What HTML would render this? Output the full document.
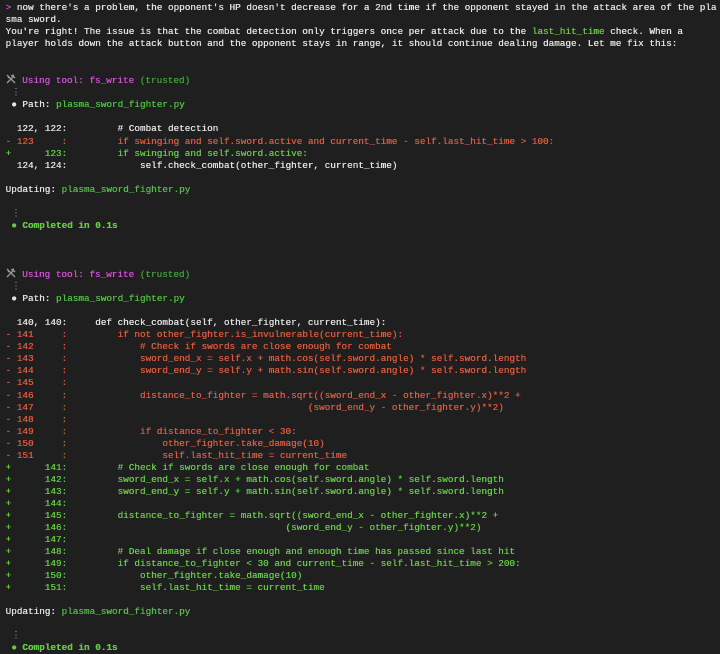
<!DOCTYPE html>
<html><head><meta charset="utf-8"><style>
html,body{margin:0;padding:0;background:#1f1f1f;width:720px;height:654px;overflow:hidden}
pre{margin:0;padding:2px 0 0 5.5px;font-family:"Liberation Mono","DejaVu Sans Mono",monospace;font-size:9.33px;line-height:12.04px;color:#e2e2e2;white-space:pre;overflow:hidden;text-shadow:0.3px 0 0 currentColor}
.r{color:#dc5a3e}.g{color:#62cc40}.f{color:#50be45}.m{color:#cf52d2}.t{color:#40a03c}.d{color:#8a8a8a}.p{color:#d84fd8}.b{font-weight:bold}
.ic{display:inline-block;width:11px;height:10px;vertical-align:-1px}
</style></head><body><pre><span class="p">&gt;</span> now there's a problem, the opponent's HP doesn't decrease for a 2nd time if the opponent stayed in the attack area of the pla
sma sword.
You're right! The issue is that the combat detection only triggers once per attack due to the <span class="g">last_hit_time</span> check. When a
player holds down the attack button and the opponent stays in range, it should continue dealing damage. Let me fix this:


<svg class="ic" viewBox="0 0 11 10"><path d="M1 9 L7 3 M6 1 L9 4 M5 2 L8 1 M9 9 L3 3 M1 1 L3 3 L2 4" stroke="#9a9a9a" stroke-width="1.3" fill="none"/></svg> <span class="m">Using tool: fs_write</span> <span class="t">(trusted)</span>
 <span class="d">⋮</span>
 ● Path: <span class="f">plasma_sword_fighter.py</span>

  122, 122:         # Combat detection
<span class="r">- 123     :         if swinging and self.sword.active and current_time - self.last_hit_time &gt; 100:</span>
<span class="g">+      123:         if swinging and self.sword.active:</span>
  124, 124:             self.check_combat(other_fighter, current_time)

Updating: <span class="f">plasma_sword_fighter.py</span>

 <span class="d">⋮</span>
 <span class="g b">● Completed in 0.1s</span>



<svg class="ic" viewBox="0 0 11 10"><path d="M1 9 L7 3 M6 1 L9 4 M5 2 L8 1 M9 9 L3 3 M1 1 L3 3 L2 4" stroke="#9a9a9a" stroke-width="1.3" fill="none"/></svg> <span class="m">Using tool: fs_write</span> <span class="t">(trusted)</span>
 <span class="d">⋮</span>
 ● Path: <span class="f">plasma_sword_fighter.py</span>

  140, 140:     def check_combat(self, other_fighter, current_time):
<span class="r">- 141     :         if not other_fighter.is_invulnerable(current_time):
- 142     :             # Check if swords are close enough for combat
- 143     :             sword_end_x = self.x + math.cos(self.sword.angle) * self.sword.length
- 144     :             sword_end_y = self.y + math.sin(self.sword.angle) * self.sword.length
- 145     :
- 146     :             distance_to_fighter = math.sqrt((sword_end_x - other_fighter.x)**2 +
- 147     :                                           (sword_end_y - other_fighter.y)**2)
- 148     :
- 149     :             if distance_to_fighter &lt; 30:
- 150     :                 other_fighter.take_damage(10)
- 151     :                 self.last_hit_time = current_time</span>
<span class="g">+      141:         # Check if swords are close enough for combat
+      142:         sword_end_x = self.x + math.cos(self.sword.angle) * self.sword.length
+      143:         sword_end_y = self.y + math.sin(self.sword.angle) * self.sword.length
+      144:
+      145:         distance_to_fighter = math.sqrt((sword_end_x - other_fighter.x)**2 +
+      146:                                       (sword_end_y - other_fighter.y)**2)
+      147:
+      148:         # Deal damage if close enough and enough time has passed since last hit
+      149:         if distance_to_fighter &lt; 30 and current_time - self.last_hit_time &gt; 200:
+      150:             other_fighter.take_damage(10)
+      151:             self.last_hit_time = current_time</span>

Updating: <span class="f">plasma_sword_fighter.py</span>

 <span class="d">⋮</span>
 <span class="g b">● Completed in 0.1s</span>
</pre></body></html>
